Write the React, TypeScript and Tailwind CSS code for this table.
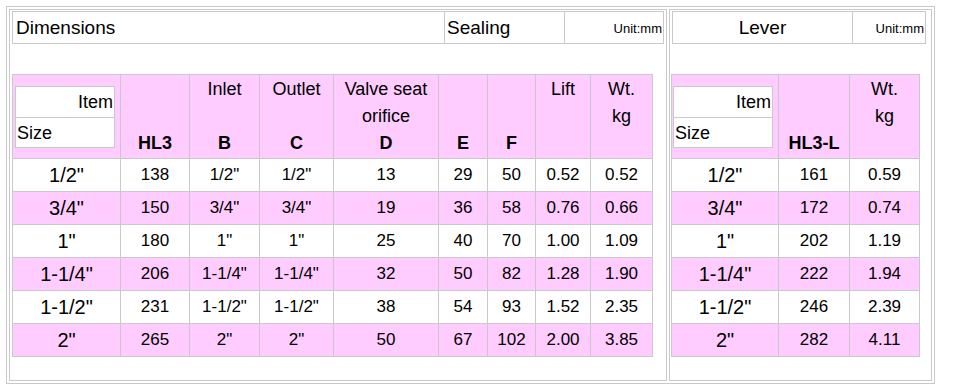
import React from "react";

const PINK = "bg-[#ffccff]";

const leftRows = [
  ["1/2\"", "138", "1/2\"", "1/2\"", "13", "29", "50", "0.52", "0.52"],
  ["3/4\"", "150", "3/4\"", "3/4\"", "19", "36", "58", "0.76", "0.66"],
  ["1\"", "180", "1\"", "1\"", "25", "40", "70", "1.00", "1.09"],
  ["1-1/4\"", "206", "1-1/4\"", "1-1/4\"", "32", "50", "82", "1.28", "1.90"],
  ["1-1/2\"", "231", "1-1/2\"", "1-1/2\"", "38", "54", "93", "1.52", "2.35"],
  ["2\"", "265", "2\"", "2\"", "50", "67", "102", "2.00", "3.85"],
];

const rightRows = [
  ["1/2\"", "161", "0.59"],
  ["3/4\"", "172", "0.74"],
  ["1\"", "202", "1.19"],
  ["1-1/4\"", "222", "1.94"],
  ["1-1/2\"", "246", "2.39"],
  ["2\"", "282", "4.11"],
];

function ItemSize({ offset }: { offset: string }) {
  return (
    <div className={`h-full flex items-center ${offset}`}>
      <div className="w-[100px] h-[62px] border border-[#c9c9c9] bg-white flex flex-col">
        <div className="h-[30px] leading-[30px] text-right pr-px text-[18px]">Item</div>
        <div className="h-[31px] leading-[31px] border-t border-[#c9c9c9] pl-px text-[18px]">Size</div>
      </div>
    </div>
  );
}

function HeadCell({ l1, l2, l3 }: { l1?: string; l2?: string; l3?: string }) {
  return (
    <div className={`${PINK} flex flex-col items-center pt-px text-[18px]`}>
      <div className="h-[27px] leading-[27px]">{l1 ?? "\u00a0"}</div>
      <div className="h-[27px] leading-[27px]">{l2 ?? "\u00a0"}</div>
      <div className="h-[27px] leading-[27px] font-bold">{l3 ?? "\u00a0"}</div>
    </div>
  );
}

function DataRows({ rows }: { rows: string[][] }) {
  return (
    <>
      {rows.map((r, i) =>
        r.map((v, j) => (
          <div
            key={`${i}-${j}`}
            className={`${i % 2 === 1 ? PINK : "bg-white"} flex items-center justify-center ${
              j === 0 ? "text-[20px]" : "text-[17px]"
            }`}
          >
            {v}
          </div>
        ))
      )}
    </>
  );
}

export default function App() {
  return (
    <div className="w-[957px] h-[386px] bg-white pl-[6px] pt-[6px] text-black font-['Liberation_Sans',Arial,sans-serif]">
      <div className="w-[929px] h-[378px] border border-[#c9c9c9] p-[2px] flex gap-[2px]">
        {/* Left cell */}
        <div className="w-[658px] h-[372px] border border-[#c9c9c9] pt-px pl-px">
          <div className="ml-px w-[652px] h-[33px] border border-[#c9c9c9] flex">
            <div className="w-[431px] pl-[3px] text-[19px] leading-[31px]">Dimensions</div>
            <div className="w-[120px] border-l border-[#c9c9c9] pl-[2px] text-[19px] leading-[31px]">Sealing</div>
            <div className="flex-1 border-l border-[#c9c9c9] text-right pr-px text-[13px] leading-[33px]">Unit:mm</div>
          </div>
          <div className="mt-[30px] ml-px w-[641px] bg-[#c9c9c9] p-px gap-px grid grid-cols-[107px_68px_69px_73px_104px_48px_47px_54px_61px] grid-rows-[83px_repeat(6,32px)]">
            <div className={PINK}>
              <ItemSize offset="pl-[2px]" />
            </div>
            <HeadCell l3="HL3" />
            <HeadCell l1="Inlet" l3="B" />
            <HeadCell l1="Outlet" l3="C" />
            <HeadCell l1="Valve seat" l2="orifice" l3="D" />
            <HeadCell l3="E" />
            <HeadCell l3="F" />
            <HeadCell l1="Lift" />
            <HeadCell l1="Wt." l2="kg" />
            <DataRows rows={leftRows} />
          </div>
        </div>
        {/* Right cell */}
        <div className="w-[263px] h-[372px] border border-[#c9c9c9] pt-px pl-px">
          <div className="ml-px w-[254px] h-[33px] border border-[#c9c9c9] flex">
            <div className="w-[179px] text-center text-[19px] leading-[31px]">Lever</div>
            <div className="flex-1 border-l border-[#c9c9c9] text-right pr-px text-[13px] leading-[33px]">Unit:mm</div>
          </div>
          <div className="mt-[30px] w-[249px] bg-[#c9c9c9] p-px gap-px grid grid-cols-[106px_70px_69px] grid-rows-[83px_repeat(6,32px)]">
            <div className={PINK}>
              <ItemSize offset="pl-px" />
            </div>
            <HeadCell l3="HL3-L" />
            <HeadCell l1="Wt." l2="kg" />
            <DataRows rows={rightRows} />
          </div>
        </div>
      </div>
    </div>
  );
}
